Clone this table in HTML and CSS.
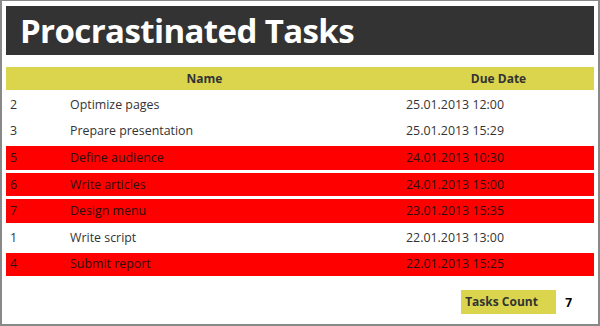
FILE: index.html
```html
<!DOCTYPE html>
<html lang="en">
<head>
    <meta charset="UTF-8">
    <title>Procrastinated Tasks</title>
    <link rel="stylesheet" href="styles.css">
</head>
<body>
    <div class="frame">
        <h1 class="title">Procrastinated Tasks</h1>
        <table class="tasks">
            <colgroup>
                <col class="col-id">
                <col class="col-name">
                <col class="col-date">
            </colgroup>
            <thead>
                <tr>
                    <th colspan="2">Name</th>
                    <th>Due Date</th>
                </tr>
            </thead>
            <tbody>
                <tr><td>2</td><td>Optimize pages</td><td>25.01.2013 12:00</td></tr>
                <tr><td>3</td><td>Prepare presentation</td><td>25.01.2013 15:29</td></tr>
                <tr class="late"><td>5</td><td>Define audience</td><td>24.01.2013 10:30</td></tr>
                <tr class="late"><td>6</td><td>Write articles</td><td>24.01.2013 15:00</td></tr>
                <tr class="late"><td>7</td><td>Design menu</td><td>23.01.2013 15:35</td></tr>
                <tr><td>1</td><td>Write script</td><td>22.01.2013 13:00</td></tr>
                <tr class="late"><td>4</td><td>Submit report</td><td>22.01.2013 15:25</td></tr>
            </tbody>
        </table>
        <div class="summary">
            <span class="summary-label">Tasks Count</span>
            <span class="summary-value">7</span>
        </div>
    </div>
</body>
</html>
```

FILE: styles.css
```css
html, body {
    margin: 0;
    padding: 0;
    background: #ffffff;
}
body {
    font-family: "Open Sans", "Noto Sans", sans-serif;
    color: #333333;
}
.frame {
    box-sizing: border-box;
    width: 600px;
    height: 326px;
    border: 2px solid #898989;
    border-top-width: 1px;
    padding: 5px 4px;
}
.title {
    margin: 0;
    height: 49px;
    box-sizing: border-box;
    padding-left: 14px;
    background: #333333;
    color: #ffffff;
    font-size: 33px;
    font-weight: bold;
    line-height: 49px;
    letter-spacing: -0.6px;
}
.tasks {
    width: 100%;
    margin-top: 9px;
    border-collapse: separate;
    border-spacing: 0 3px;
    table-layout: fixed;
    font-size: 12.4px;
}
.col-id {
    width: 60px;
}
.col-date {
    width: 191px;
}
.tasks th {
    height: 23px;
    padding: 0;
    background: #dbd54d;
    color: #333333;
    font-weight: bold;
    font-size: 12px;
}
.tasks td {
    height: 23.6px;
    padding: 0 4px 1px;
    box-sizing: border-box;
    white-space: nowrap;
}
.tasks td:last-child {
    padding-left: 3px;
}
.tasks tr.late td {
    background: #ff0000;
    color: #2a1010;
}
.summary {
    display: flex;
    justify-content: flex-end;
    align-items: center;
    margin-top: 11px;
    padding-right: 22px;
}
.summary-label {
    width: 95px;
    height: 24px;
    box-sizing: border-box;
    padding-left: 4px;
    background: #dbd54d;
    font-size: 12px;
    font-weight: bold;
    line-height: 24px;
}
.summary-value {
    margin-left: 9px;
    font-size: 12px;
    font-weight: bold;
    color: #000000;
}
```
